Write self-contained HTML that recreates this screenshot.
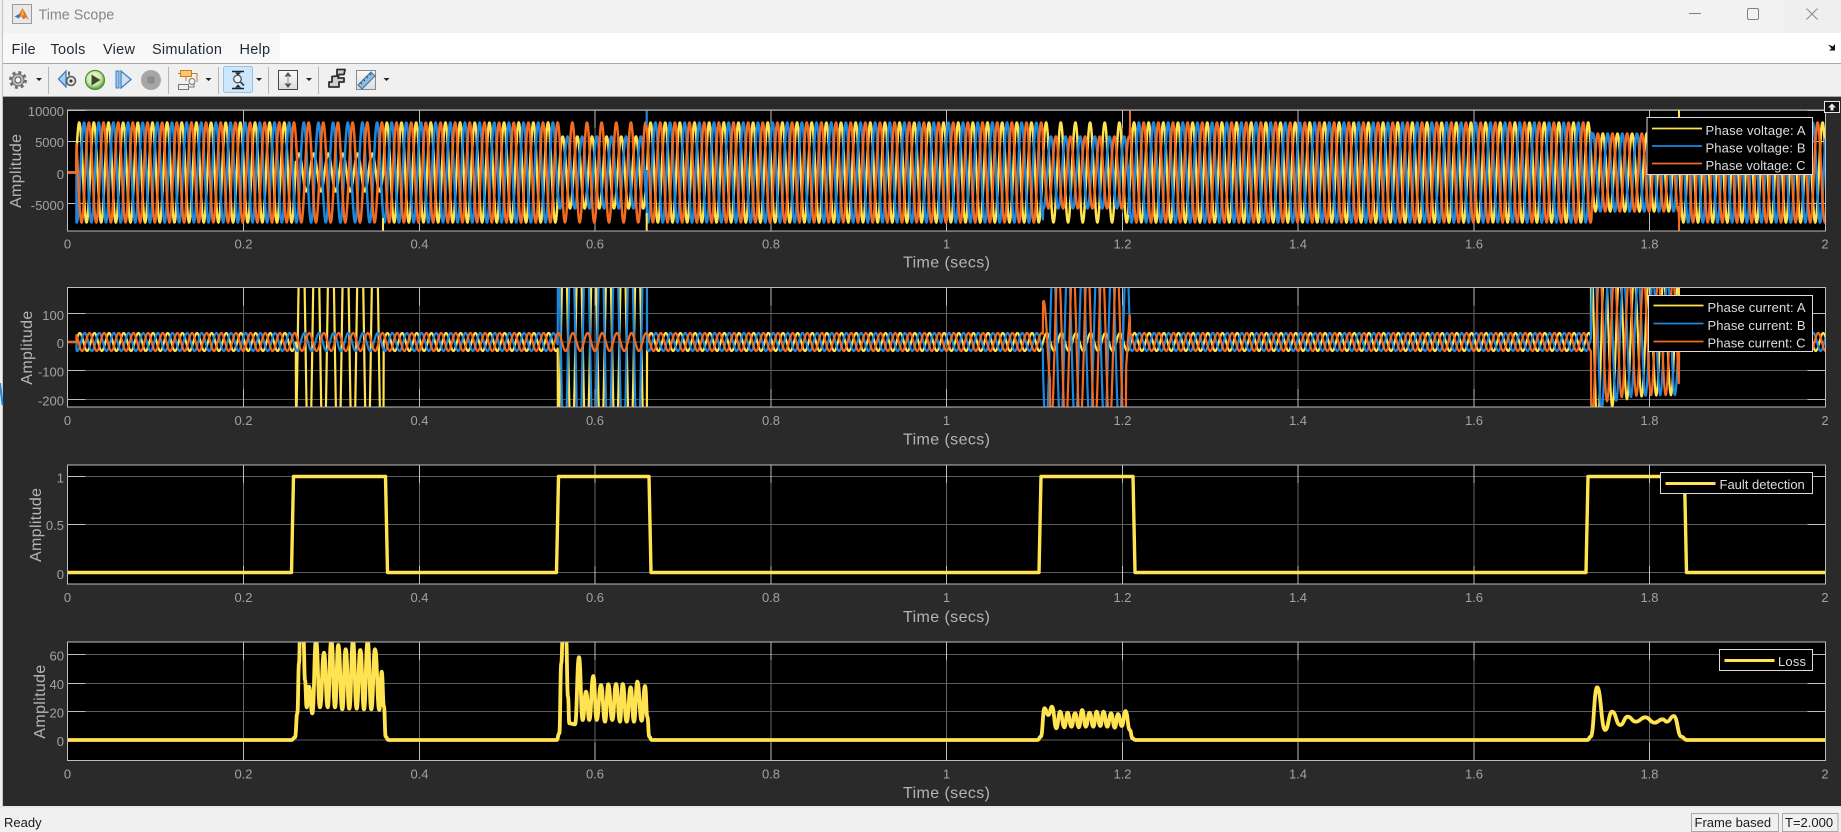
<!DOCTYPE html>
<html><head><meta charset="utf-8"><title>Time Scope</title>
<style>
html,body{margin:0;padding:0;background:#2a2a2a;width:1841px;height:832px;overflow:hidden}
svg{position:absolute;left:0;top:0;display:block}
text{font-family:"Liberation Sans",sans-serif}
.t{fill:#a2a2a2;font-size:13px}
.e{text-anchor:end}.m{text-anchor:middle}
.l{fill:#b4b4b4;font-size:16px}
.g{fill:#dedede;font-size:13px}
.mn{fill:#1f2a38;font-size:14.5px;letter-spacing:.25px}
.s{fill:#1a1a1a;font-size:13px}
</style></head><body>
<svg width="1841" height="832" viewBox="0 0 1841 832" xmlns="http://www.w3.org/2000/svg">
<defs>
<clipPath id="c1"><rect x="67.5" y="110" width="1758" height="121"/></clipPath>
<clipPath id="c2"><rect x="67.5" y="287.5" width="1758" height="119.5"/></clipPath>
<clipPath id="c3"><rect x="67.5" y="465" width="1758" height="119"/></clipPath>
<clipPath id="c4"><rect x="67.5" y="642" width="1758" height="118.5"/></clipPath>
<radialGradient id="gp" cx=".45" cy=".4" r=".6"><stop offset="0" stop-color="#f4fbe4"/><stop offset=".6" stop-color="#cfe8a8"/><stop offset="1" stop-color="#4f9a35"/></radialGradient>
<linearGradient id="gs" x1="0" y1="0" x2="0" y2="1"><stop offset="0" stop-color="#fafafa"/><stop offset="1" stop-color="#dcdcdc"/></linearGradient>
</defs>

<!-- window chrome -->
<rect x="0" y="0" width="1841" height="33" fill="#f2f2f2"/>
<rect x="1784" y="0" width="57" height="33" fill="#efefef"/>
<rect x="0" y="33" width="1841" height="30" fill="#ffffff"/>
<rect x="3" y="33" width="277" height="30" fill="#f8f8f8"/>
<rect x="0" y="63" width="1841" height="1" fill="#a8a8a8"/>
<rect x="0" y="64" width="1841" height="32" fill="#f0f0f0"/>
<rect x="0" y="96" width="1841" height="1" fill="#a8a8a8"/>
<rect x="0" y="97" width="1841" height="710" fill="#2a2a2a"/>
<rect x="0" y="0" width="3" height="832" fill="#f0f0f0"/>
<rect x="2" y="0" width="1" height="832" fill="#c4c4c4"/>
<path d="M0 383L2.5 405" stroke="#1f87dc" stroke-width="2" fill="none"/>
<rect x="0" y="807" width="1841" height="25" fill="#f0f0f0"/>
<rect x="0" y="806" width="1841" height="1.5" fill="#e4e4e4"/>

<!-- title bar -->
<rect x="12.5" y="4.5" width="19" height="19" fill="#e8e8e8" stroke="#9a9a9a"/>
<path d="M14.5 16.5L19 14L22.5 8L25.5 13L29 20.5L26 17.5L23.5 19.5L21 16Z" fill="#e8742a"/>
<path d="M14.5 16.5L19 14L21 16L18.5 18.5Z" fill="#3c7fc0"/>
<path d="M22.5 8L24 15L21 16Z" fill="#f2b13a"/>
<text x="38.5" y="19.5" fill="#868686" font-size="14.3">Time Scope</text>
<rect x="1689" y="13" width="12" height="1" fill="#808080"/>
<rect x="1747.5" y="8.5" width="11" height="11" rx="1.5" fill="none" stroke="#808080"/>
<path d="M1806.5 8.5L1817.5 19.5M1817.5 8.5L1806.5 19.5" stroke="#8a8a8a" stroke-width="1" fill="none"/>

<!-- menu -->
<text class="mn" x="11.5" y="54">File</text>
<text class="mn" x="50.5" y="54">Tools</text>
<text class="mn" x="103" y="54">View</text>
<text class="mn" x="152" y="54">Simulation</text>
<text class="mn" x="239.5" y="54">Help</text>
<path d="M1828 44.5L1833 46.5L1835 44V50.5H1829L1831.5 48.5Z" fill="#111"/>

<!-- toolbar -->
<g>
<circle cx="18" cy="80" r="7.5" fill="none" stroke="#707070" stroke-width="3" stroke-dasharray="3 2.9"/>
<circle cx="18" cy="80" r="6" fill="#bdbdbd" stroke="#666"/>
<circle cx="18" cy="80" r="3" fill="#f4f4f4" stroke="#555"/>
<rect x="48" y="67" width="1" height="27" fill="#b5b5b5"/>
<path d="M66 71V87L58.5 79Z" fill="#a9cdee" stroke="#3b7fc0" stroke-width="1.3"/>
<circle cx="71" cy="81" r="4.5" fill="#e0e0e0" stroke="#5a5a5a" stroke-width="1.6"/>
<circle cx="71" cy="81" r="1.5" fill="#333"/>
<rect x="68" y="71.5" width="2" height="4" fill="#666"/>
<circle cx="95" cy="80" r="9.5" fill="url(#gp)" stroke="#4c8f34" stroke-width="1.2"/>
<path d="M91.5 74.5L100.5 80L91.5 85.5Z" fill="#3a4a34"/>
<rect x="116" y="71" width="3" height="17" fill="#9cc6ea" stroke="#3b7fc0"/>
<path d="M121 71V88L131 79.5Z" fill="#cfe2f4" stroke="#3b7fc0" stroke-width="1.3"/>
<circle cx="151" cy="80" r="10" fill="#a6a6a6"/>
<rect x="147.5" y="76.5" width="7" height="7" fill="#8c8c8c"/>
<rect x="168" y="67" width="1" height="27" fill="#b5b5b5"/>
<rect x="180.5" y="70.5" width="11" height="6" fill="#f6c878" stroke="#d07a1e"/>
<path d="M178 73.5H180M192 73.5H197V82M186 77V81" stroke="#d07a1e" fill="none"/>
<rect x="178.5" y="84.5" width="10" height="5" fill="#f0f0f0" stroke="#777"/>
<circle cx="192" cy="81.5" r="3" fill="#f0f0f0" stroke="#777"/>
<path d="M188.5 87H194V84" stroke="#777" fill="none"/>
<rect x="218" y="67" width="1" height="27" fill="#b5b5b5"/>
<rect x="223.5" y="66.5" width="29" height="26" rx="2" fill="#cce6fb" stroke="#90c4ec"/>
<path d="M232 71.5H244M232 88.5H244" stroke="#222" stroke-width="1.6"/>
<path d="M235 72.5H241L238 75.5ZM235 87.5H241L238 84.5Z" fill="#222"/>
<circle cx="237.5" cy="79" r="3.8" fill="#e9f4fc" stroke="#555" stroke-width="1.3"/>
<path d="M240.5 82L244 85.5" stroke="#444" stroke-width="1.8"/>
<rect x="268" y="67" width="1" height="27" fill="#b5b5b5"/>
<rect x="278.5" y="70.5" width="19" height="19" fill="url(#gs)" stroke="#444"/>
<path d="M288 72L284.5 76.5H291.5ZM288 88L284.5 83.5H291.5Z" fill="#555"/>
<path d="M288 76V84" stroke="#999"/>
<rect x="318" y="67" width="1" height="27" fill="#b5b5b5"/>
<path d="M337 69.5H345L344 74.5H339L338 78H344V82H339V87H329V82H332V76.5L337 76Z" fill="#cfcfcf" stroke="#2e2e2e" stroke-width="1.8" stroke-linejoin="round"/>
<rect x="356.5" y="70.5" width="19" height="19" fill="url(#gs)" stroke="#8a8a8a"/>
<path d="M358 85L371 72L375 76L362 89Z" fill="#8fbddf" stroke="#3f6f96"/>
<path d="M362 84L360.5 82.5M365 81L363.5 79.5M368 78L366.5 76.5M371 75L369.5 73.5" stroke="#24445e"/>
</g>
<path d="M36 78H42L39 81Z M205.5 78H211.5L208.5 81Z M256 78H262L259 81Z M306 78H312L309 81Z M383.5 78H389.5L386.5 81Z" fill="#222"/>

<!-- plots -->
<g id="p"></g>

<!-- text ticks -->
<g class="t">
<text class="t e" x="64" y="116">10000</text>
<text class="t e" x="64" y="147">5000</text>
<text class="t e" x="64" y="179">0</text>
<text class="t e" x="64" y="210">-5000</text>
<text class="t e" x="64" y="320">100</text><text class="t e" x="64" y="348">0</text>
<text class="t e" x="64" y="376.5">-100</text><text class="t e" x="64" y="405.5">-200</text>
<text class="t e" x="64" y="482.5">1</text><text class="t e" x="64" y="530">0.5</text><text class="t e" x="64" y="579">0</text>
<text class="t e" x="64" y="660.5">60</text><text class="t e" x="64" y="689">40</text><text class="t e" x="64" y="717.5">20</text><text class="t e" x="64" y="746">0</text>
</g>
<g id="xt1">
<text class="t m" x="67.5" y="248.5">0</text><text class="t m" x="243.5" y="248.5">0.2</text><text class="t m" x="419.5" y="248.5">0.4</text><text class="t m" x="595" y="248.5">0.6</text><text class="t m" x="771" y="248.5">0.8</text><text class="t m" x="946.5" y="248.5">1</text><text class="t m" x="1122.5" y="248.5">1.2</text><text class="t m" x="1298" y="248.5">1.4</text><text class="t m" x="1474" y="248.5">1.6</text><text class="t m" x="1649.5" y="248.5">1.8</text><text class="t m" x="1825" y="248.5">2</text>
<text class="t m" x="67.5" y="425">0</text><text class="t m" x="243.5" y="425">0.2</text><text class="t m" x="419.5" y="425">0.4</text><text class="t m" x="595" y="425">0.6</text><text class="t m" x="771" y="425">0.8</text><text class="t m" x="946.5" y="425">1</text><text class="t m" x="1122.5" y="425">1.2</text><text class="t m" x="1298" y="425">1.4</text><text class="t m" x="1474" y="425">1.6</text><text class="t m" x="1649.5" y="425">1.8</text><text class="t m" x="1825" y="425">2</text>
<text class="t m" x="67.5" y="602">0</text><text class="t m" x="243.5" y="602">0.2</text><text class="t m" x="419.5" y="602">0.4</text><text class="t m" x="595" y="602">0.6</text><text class="t m" x="771" y="602">0.8</text><text class="t m" x="946.5" y="602">1</text><text class="t m" x="1122.5" y="602">1.2</text><text class="t m" x="1298" y="602">1.4</text><text class="t m" x="1474" y="602">1.6</text><text class="t m" x="1649.5" y="602">1.8</text><text class="t m" x="1825" y="602">2</text>
<text class="t m" x="67.5" y="778.5">0</text><text class="t m" x="243.5" y="778.5">0.2</text><text class="t m" x="419.5" y="778.5">0.4</text><text class="t m" x="595" y="778.5">0.6</text><text class="t m" x="771" y="778.5">0.8</text><text class="t m" x="946.5" y="778.5">1</text><text class="t m" x="1122.5" y="778.5">1.2</text><text class="t m" x="1298" y="778.5">1.4</text><text class="t m" x="1474" y="778.5">1.6</text><text class="t m" x="1649.5" y="778.5">1.8</text><text class="t m" x="1825" y="778.5">2</text>
</g>

<text class="l" x="903" y="267.5" textLength="87">Time (secs)</text>
<text class="l" x="903" y="444.5" textLength="87">Time (secs)</text>
<text class="l" x="903" y="622" textLength="87">Time (secs)</text>
<text class="l" x="903" y="798" textLength="87">Time (secs)</text>
<text class="l" transform="translate(21,208) rotate(-90)" textLength="74">Amplitude</text>
<text class="l" transform="translate(32,384.7) rotate(-90)" textLength="74">Amplitude</text>
<text class="l" transform="translate(41,562) rotate(-90)" textLength="74">Amplitude</text>
<text class="l" transform="translate(45,738.7) rotate(-90)" textLength="74">Amplitude</text>

<!-- legends -->
<rect x="1647" y="117.5" width="165.5" height="57" fill="#000" stroke="#dcdcdc"/>
<path d="M1652 128.5H1702" stroke="#FFE350" stroke-width="1.8"/><path d="M1652 146H1702" stroke="#1f87dc" stroke-width="1.8"/><path d="M1652 163.5H1702" stroke="#f26b21" stroke-width="1.8"/>
<text class="g" x="1705.5" y="135" textLength="100">Phase voltage: A</text>
<text class="g" x="1705.5" y="152.5" textLength="100">Phase voltage: B</text>
<text class="g" x="1705.5" y="170" textLength="100">Phase voltage: C</text>

<rect x="1648.5" y="295.5" width="164" height="56" fill="#000" stroke="#dcdcdc"/>
<path d="M1653.5 305.5H1703.5" stroke="#FFE350" stroke-width="1.8"/><path d="M1653.5 323.5H1703.5" stroke="#1f87dc" stroke-width="1.8"/><path d="M1653.5 341.5H1703.5" stroke="#f26b21" stroke-width="1.8"/>
<text class="g" x="1707.5" y="312" textLength="98">Phase current: A</text>
<text class="g" x="1707.5" y="330" textLength="98">Phase current: B</text>
<text class="g" x="1707.5" y="347.5" textLength="98">Phase current: C</text>

<rect x="1660.5" y="472.5" width="152" height="21" fill="#000" stroke="#dcdcdc"/>
<path d="M1665.5 483.5H1715.5" stroke="#FFE350" stroke-width="3"/>
<text class="g" x="1719.5" y="489">Fault detection</text>

<rect x="1719.5" y="649.5" width="93" height="21" fill="#000" stroke="#dcdcdc"/>
<path d="M1724.5 660.5H1774.5" stroke="#FFE350" stroke-width="3"/>
<text class="g" x="1778" y="666" textLength="28">Loss</text>

<!-- collapse button -->
<rect x="1824.5" y="101.5" width="15" height="11" fill="#111" stroke="#e8e8e8"/>
<path d="M1832 103.5L1828 107.5H1830.5V110.5H1833.5V107.5H1836Z" fill="#e8e8e8"/>

<!-- status bar -->
<text class="s" x="4" y="827">Ready</text>
<rect x="1691.5" y="813.5" width="87" height="18" fill="#f0f0f0" stroke="#a8a8a8"/>
<text class="s" x="1694.5" y="827">Frame based</text>
<rect x="1782.5" y="813.5" width="55.5" height="18" fill="#f0f0f0" stroke="#a8a8a8"/>
<text class="s" x="1785" y="827">T=2.000</text>
</svg>
<script>
(function(){
var NS='http://www.w3.org/2000/svg',P=document.getElementById('p');
var Y='#FFE350',B='#1f87dc',O='#f26b21',X0=67.5,X1=1825.5,PER=14.65;
function el(n,a,par){var e=document.createElementNS(NS,n);for(var k in a)e.setAttribute(k,a[k]);(par||P).appendChild(e);return e;}
var vx=[243.5,419.5,595,771,946.5,1122.5,1298,1474,1649.5];
var plots=[
 {t:110,b:231,h:[110.5,141.5,172.5,203.5],c:'c1'},
 {t:287.5,b:407,h:[313.5,342,370.5,399.5],c:'c2'},
 {t:465,b:584,h:[476.5,524.5,572.5],c:'c3'},
 {t:642,b:760.5,h:[654.5,683.5,711.5,740],c:'c4'}];
plots.forEach(function(p){
 el('rect',{x:X0,y:p.t,width:X1-X0,height:p.b-p.t,fill:'#000'});
 var d='',tk='';
 vx.forEach(function(x){d+='M'+x+' '+p.t+'V'+p.b;tk+='M'+x+' '+p.t+'v18M'+x+' '+p.b+'v-18';});
 el('path',{d:d,stroke:'#666','stroke-width':1,fill:'none'});
 var dh='';
 p.h.forEach(function(y){dh+='M'+X0+' '+y+'H'+X1;tk+='M'+X0+' '+y+'h18M'+X1+' '+y+'h-18';});
 el('path',{d:dh,stroke:'#5c5c5c','stroke-width':1,fill:'none'});
 el('path',{d:tk,stroke:'#bdbdbd','stroke-width':1,fill:'none'});
 p.g=el('g',{'clip-path':'url(#'+p.c+')'});
});
function path(par,d,c,w){el('path',{d:d,stroke:c,'stroke-width':w,fill:'none','stroke-linejoin':'round','stroke-linecap':'butt'},par);}
function series(fn,yc){
 var d='M'+X0+' '+yc+'L76.5 '+yc,x,r,y;
 for(x=76.5;x<=X1;x+=0.3){r=fn(x);
  y=yc-r[1]-r[0]*Math.cos(2*Math.PI*((x-X0)/PER-r[2]));
  d+='L'+x.toFixed(1)+' '+y.toFixed(1);}
 return d;
}
function inn(x,a,b){return x>=a&&x<b;}
/* voltage */
var g1=plots[0].g,VW=2.5;
path(g1,series(function(x){return [inn(x,296,383)?19:inn(x,558,647)?36:inn(x,1591.7,1679)?39:50,0,.8];},172.5),Y,VW);
path(g1,series(function(x){return [(inn(x,558,647)||inn(x,1043,1130))?36:inn(x,1591.7,1679)?39:50,0,.13];},172.5),B,VW);
path(g1,series(function(x){return [inn(x,1043,1130)?36:inn(x,1591.7,1679)?39:50,0,.46];},172.5),O,VW);
/* spikes */
path(g1,'M383 218V235',Y,2);
path(g1,'M646.7 105V125M646.7 170V220',B,2.2);
path(g1,'M646.7 213V235',Y,2);
path(g1,'M1130 105V136',O,2);
path(g1,'M1129 165V215',B,2.2);
path(g1,'M1679 105V118',Y,2);
path(g1,'M1679 206V235',O,2);
/* current */
var g2=plots[1].g,CW=2.2;
function decay(x,s,a){return a*Math.exp(-(x-s)/14);}
path(g2,series(function(x){
 if(inn(x,296,383.5))return [150,15,.98];
 if(inn(x,558,647))return [120,0,.92];
 if(inn(x,1591,1679))return [58+decay(x,1591,55),5,.95];
 return [9,0,.84];},342),Y,CW);
path(g2,series(function(x){
 if(inn(x,558,647))return [120,0,.42];
 if(inn(x,1043,1130))return [85,-3,.29];
 if(inn(x,1591,1679))return [58+decay(x,1591,35),5,.22];
 return [9,0,.17];},342),B,CW);
path(g2,series(function(x){
 if(inn(x,1043,1050))return [41,0,.63];
 if(inn(x,1050,1126))return [85,-3,.63];
 if(inn(x,1126,1130))return [36,0,.63];
 if(inn(x,1591,1679))return [58+decay(x,1591,20),5,.59];
 return [9,0,.5];},342),O,CW);
/* fault detection */
var g3=plots[2].g;
path(g3,'M'+X0+' 572.5H291.5L293.5 476.5H385.5L387.5 572.5H556.5L558.5 476.5H649L651 572.5H1039L1041 476.5H1133L1135 572.5H1586L1588 476.5H1684.5L1686.5 572.5H'+X1,Y,3.4);
/* loss */
var g4=plots[3].g;
function A(list,sx,ox){return list.map(function(p){return [ox+p[0]/sx,630+p[1]/3];});}
var f1=[[275,330],[285,322],[292,250],[297,100],[300,20],[310,20],[315,150],[320,232],[327,170],[337,250],[348,30],[360,232],[372,68],[383,232],[394,30],[405,232],[415,45],[427,238],[437,58],[448,236],[459,33],[470,236],[481,60],[492,238],[503,33],[514,238],[525,58],[538,240],[545,125],[552,230],[557,320],[565,330]];
var f2=[[1070,330],[1078,310],[1084,100],[1088,20],[1098,20],[1104,200],[1108,280],[1125,283],[1137,82],[1148,270],[1158,185],[1168,270],[1180,138],[1190,270],[1203,165],[1215,275],[1225,163],[1237,270],[1248,162],[1260,275],[1268,162],[1280,275],[1292,172],[1302,275],[1312,155],[1325,272],[1335,168],[1342,260],[1348,320],[1355,330]];
var f3=[[70,330],[76,320],[83,235],[90,255],[97,230],[105,295],[112,245],[120,292],[126,248],[133,290],[140,250],[147,292],[153,240],[160,290],[167,248],[174,290],[180,245],[187,288],[193,245],[200,290],[207,250],[214,293],[220,252],[227,288],[234,243],[242,300],[247,325],[252,330]];
var f4=[[1095,330],[1101,320],[1113,172],[1128,300],[1141,245],[1156,285],[1170,260],[1185,275],[1203,262],[1220,278],[1235,268],[1243,275],[1256,258],[1270,320],[1280,330]];
var pts=[[X0,740]].concat(A(f1,3,200),A(f2,3,200),A(f3,1.864,1000),A(f4,1.864,1000),[[X1,740]]);
var d='M'+pts[0][0]+' '+pts[0][1];
for(var i=1;i<pts.length;i++){var a=pts[i-1],b=pts[i],dx=(b[0]-a[0])/2;
 d+='C'+(a[0]+dx).toFixed(1)+' '+a[1].toFixed(1)+' '+(b[0]-dx).toFixed(1)+' '+b[1].toFixed(1)+' '+b[0].toFixed(1)+' '+b[1].toFixed(1);}
path(g4,d,Y,3.8);
/* axes box */
plots.forEach(function(p){el('rect',{x:X0,y:p.t,width:X1-X0,height:p.b-p.t,fill:'none',stroke:'#bdbdbd','stroke-width':1});});
})();
</script>
</body></html>
